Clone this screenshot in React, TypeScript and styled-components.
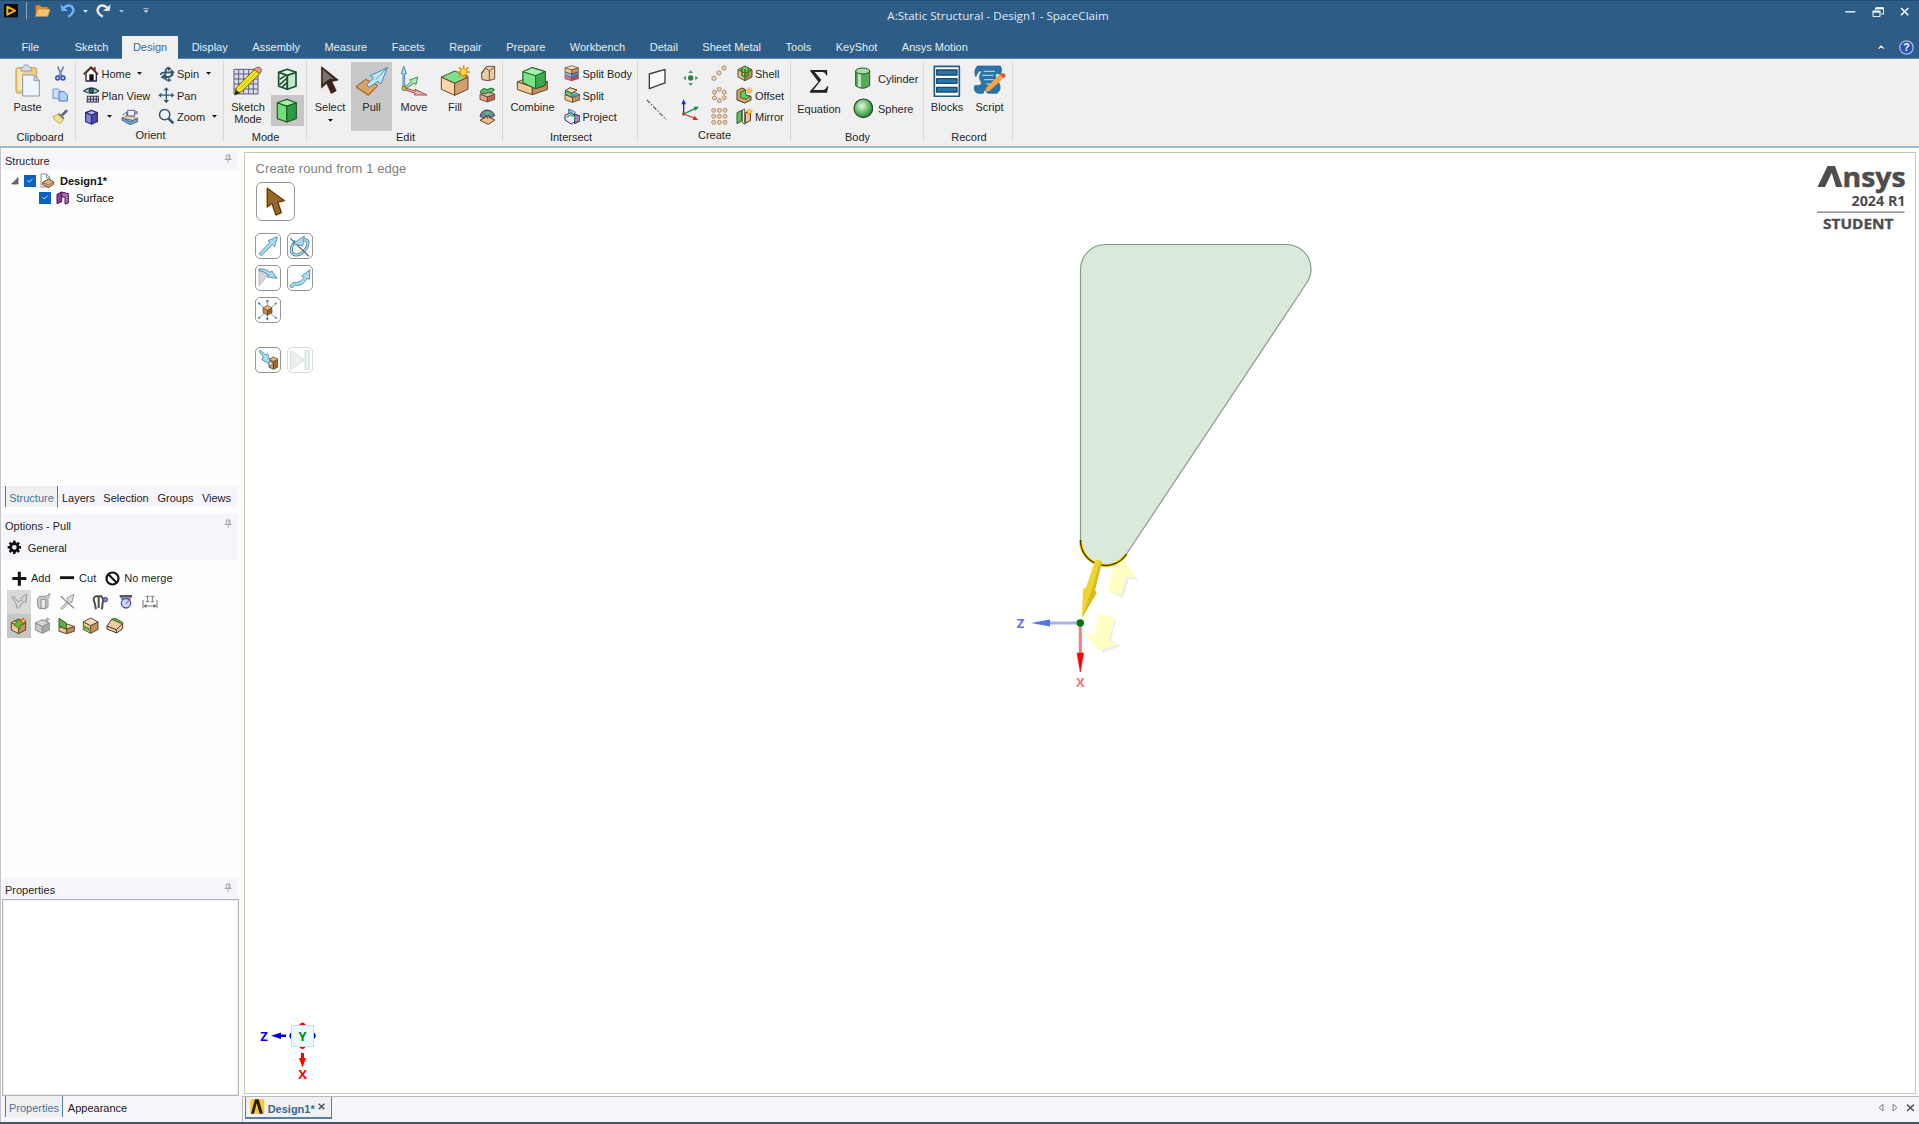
import React from "react";
import styled, { createGlobalStyle, css } from "styled-components";

const Global = createGlobalStyle`
  * { box-sizing: border-box; }
  html, body { margin: 0; padding: 0; background: #fff; overflow: hidden; }
  body { font-family: "Liberation Sans", Arial, sans-serif; font-size: 11px; color: #262626; }
`;

/* ---------- shell ---------- */
const Shell = styled.div`
  width: 1919px;
  height: 1124px;
  display: flex;
  flex-direction: column;
  background: #fdfdfe;
  overflow: hidden;
`;
const Header = styled.header`
  height: 59px;
  background: #2d5c86;
  border-top: 1px solid #214a6d;
  border-bottom: 1px solid #5f86aa;
  display: flex;
  flex-direction: column;
`;
const TitleBar = styled.div`
  height: 35px;
  display: grid;
  grid-template-columns: 868px 260px 1fr;
`;
const QuickAccess = styled.div`
  height: 20px;
  display: flex;
  align-items: center;
  padding-left: 4px;
`;
const WindowTitle = styled.div`
  font: 11.6px/30px "Open Sans", "Noto Sans", sans-serif;
  color: #e3ebf2;
  text-align: center;
  white-space: nowrap;
`;
const WindowButtons = styled.div`
  height: 22px;
  display: flex;
  align-items: center;
  justify-content: flex-end;
  padding-right: 9.5px;
  gap: 16px;
`;
const TabBar = styled.nav`
  height: 22px;
  display: flex;
  align-items: stretch;
`;
const Tab = styled.div<{ $active?: boolean; $w?: number }>`
  margin: 0 1px;
  padding: 0 11.25px;
  line-height: 23px;
  white-space: nowrap;
  color: ${(p) => (p.$active ? "#3c6b98" : "#e6edf4")};
  background: ${(p) => (p.$active ? "#f0f0f0" : "transparent")};
  ${(p) => p.$active && css`height: 23px;`}
  ${(p) => p.$w && css`width: ${p.$w}px; padding: 0 2px 0 0; margin: 0; text-align: center; line-height: 22px;`}
`;
const TabBarEnd = styled.div`
  margin-left: auto;
  padding-right: 5px;
  display: flex;
  align-items: center;
  gap: 13.5px;
`;

/* ---------- ribbon ---------- */
const Ribbon = styled.div`
  height: 89px;
  background: #f0f0f0;
  border-bottom: 2px solid #9fb9d0;
  display: flex;
`;
const Group = styled.section<{ $w: number }>`
  width: ${(p) => p.$w}px;
  height: 83px;
  padding-top: 4px;
  display: flex;
  flex-direction: column;
  flex: none;
  background: linear-gradient(#d9d9d9, #d9d9d9) right 2px / 1px 81px no-repeat;
`;
const GroupBody = styled.div`
  height: 67px;
  display: flex;
`;
const GroupLabel = styled.div<{ $dx?: number }>`
  line-height: 14px;
  text-align: center;
  padding-left: ${(p) => p.$dx ?? 0}px;
`;
const Big = styled.div<{ $w: number; $l?: number; $on?: boolean }>`
  width: ${(p) => p.$w}px;
  margin-left: ${(p) => p.$l ?? 0}px;
  margin-top: -1px;
  height: 69px;
  flex: none;
  display: flex;
  flex-direction: column;
  align-items: center;
  line-height: 12px;
  text-align: center;
  white-space: nowrap;
  background: ${(p) => (p.$on ? "#c8c8c8" : "transparent")};
  > svg:last-child:not(:first-child) { margin-top: 6px; }
`;
const BigIcon = styled.div`
  height: 39px;
  display: flex;
  align-items: center;
  padding-bottom: 1px;
`;
const Column = styled.div<{ $w: number; $l?: number; $t?: number; $center?: boolean }>`
  width: ${(p) => p.$w}px;
  margin-left: ${(p) => p.$l ?? 0}px;
  padding-top: ${(p) => p.$t ?? 0}px;
  flex: none;
  display: flex;
  flex-direction: column;
  align-items: ${(p) => (p.$center ? "center" : "flex-start")};
`;
const Row = styled.div<{ $h?: number }>`
  height: ${(p) => p.$h ?? 21.5}px;
  display: flex;
  align-items: center;
  white-space: nowrap;
`;
const IconBox = styled.span<{ $w?: number; $l?: number }>`
  width: ${(p) => p.$w ?? 16}px;
  margin-left: ${(p) => p.$l ?? 0}px;
  display: flex;
  justify-content: center;
  align-items: center;
`;
const Label = styled.span<{ $l?: number }>`
  margin-left: ${(p) => p.$l ?? 2.5}px;
  line-height: 13px;
  padding-top: 2px;
`;
const ModeButton = styled.div<{ $on?: boolean }>`
  width: 33px;
  height: 31px;
  display: flex;
  align-items: center;
  justify-content: center;
  background: ${(p) => (p.$on ? "#c6c6c6" : "transparent")};
`;

/* ---------- side panel ---------- */
const Main = styled.div`
  height: 974px;
  display: flex;
  border-left: 1px solid #c4c4cc;
`;
const Side = styled.aside`
  width: 241px;
  display: flex;
  flex-direction: column;
  padding: 2px 4px 0 1px;
`;
const PanelTitle = styled.div<{ $h?: number; $t?: number }>`
  height: ${(p) => p.$h ?? 20}px;
  flex: none;
  background: #f6f5fb;
  display: flex;
  align-items: center;
  justify-content: space-between;
  padding: 2px 6px 0 2px;
  margin: ${(p) => p.$t ?? 0}px 0 0 1px;
  > svg { margin-top: -4px; }
`;
const Tree = styled.div`
  height: 316px;
  padding-top: 2px;
`;
const TreeRow = styled.div<{ $l: number; $bold?: boolean }>`
  height: 17px;
  padding-left: ${(p) => p.$l}px;
  display: flex;
  align-items: center;
  font-weight: ${(p) => (p.$bold ? 700 : 400)};
  color: #111;
  > ${Label} { padding-top: 1px; }
`;
const Check = styled.span`
  width: 12px;
  height: 12px;
  background: #0b62bd;
  display: flex;
  align-items: center;
  justify-content: center;
`;
const TabStrip = styled.div`
  height: 21px;
  flex: none;
  display: flex;
  background: #f6f5fb;
  padding-left: 3px;
`;
const StripTab = styled.div<{ $w: number; $on?: boolean }>`
  width: ${(p) => p.$w}px;
  text-align: center;
  line-height: 24px;
  white-space: nowrap;
  color: ${(p) => (p.$on ? "#4a749b" : "#222")};
  ${(p) => p.$on && css`background: #f0f0f1; border: solid #4f7ea8; border-width: 0 1px;`}
`;
const Section = styled.div`
  height: 25px;
  margin-left: 1px;
  background: #f6f5fb;
  display: flex;
  align-items: center;
  padding-left: 4px;
  gap: 6px;
`;
const Options = styled.div`
  height: 318px;
  padding: 6px 0 0 5px;
`;
const ToolRow = styled.div<{ $h: number; $l?: number }>`
  height: ${(p) => p.$h}px;
  padding-left: ${(p) => p.$l ?? 0}px;
  display: flex;
  align-items: center;
  > ${Label} { padding-top: 1px; }
`;
const Tool = styled.div<{ $on?: string; $l?: number }>`
  width: 24px;
  height: 24px;
  margin-left: ${(p) => p.$l ?? 0}px;
  background: ${(p) => p.$on ?? "transparent"};
  display: flex;
  align-items: center;
  justify-content: center;
`;
const PropertyBox = styled.div`
  height: 197px;
  flex: none;
  width: 237px;
  border: 1px solid #b4b4b8;
  background: #fff;
  box-shadow: inset 0 0 0 1px #eeeef0;
`;
const SideFoot = styled.div`
  width: 241px;
  margin-left: -1px;
  flex: 1;
  background: #f7f6fc;
  padding-left: 1px;
`;

/* ---------- document area ---------- */
const Work = styled.main`
  flex: 1;
  display: flex;
  flex-direction: column;
`;
const Viewport = styled.div`
  position: relative;
  height: 942px;
  margin: 4px 3px 2px 2px;
  border: 1px solid #c9c6b2;
  background: #fff;
  padding: 8px 0 0 10px;
`;
const Scene = styled.svg`
  position: absolute;
  inset: 0;
`;
const Hint = styled.div`
  font-size: 13px;
  letter-spacing: 0.08px;
  line-height: 16px;
  color: #7f7f7f;
  padding-left: 0.6px;
`;
const Guide = styled.div<{ $big?: boolean; $faded?: boolean }>`
  width: ${(p) => (p.$big ? 39 : 26)}px;
  height: ${(p) => (p.$big ? 39 : 26)}px;
  border: 1.4px solid #969696;
  border-radius: ${(p) => (p.$big ? 6 : 5)}px;
  background: #fff;
  display: flex;
  align-items: center;
  justify-content: center;
  opacity: ${(p) => (p.$faded ? 0.35 : 1)};
`;
const GuideGrid = styled.div<{ $t: number; $l?: number }>`
  display: grid;
  grid-template-columns: 26px 26px;
  gap: 6px;
  padding-top: ${(p) => p.$t}px;
  padding-left: ${(p) => p.$l ?? 0}px;
`;
const DocBar = styled.div`
  flex: 1;
  border-top: 1px solid #b9b9c0;
  border-left: 1px solid #b9b9c0;
  background: #f7f6fc;
  display: flex;
  justify-content: space-between;
  padding: 0 4px 0 2px;
`;
const DocTab = styled.div`
  width: 87px;
  height: 22px;
  border: solid #5580a8;
  border-width: 0 1px 2px 1px;
  background: #f1f1f3;
  display: flex;
  align-items: center;
  padding-left: 4px;
  color: #3d678c;
  font-weight: 700;
  > span { margin: 3px 3px 0 3px; width: 47.5px; }
`;
const DocNav = styled.div`
  height: 22px;
  display: flex;
  align-items: center;
  gap: 8px;
`;
const StatusEdge = styled.div`
  height: 2px;
  background: #2d5c86;
`;

/* ---------- icon primitives (3 drawing units per pixel) ---------- */
const IconSvg = styled.svg`
  display: block;
  flex: none;
`;
type IcoProps = { b: [number, number, number, number]; children: React.ReactNode };
const Ico = ({ b, children }: IcoProps) => (
  <IconSvg width={b[2] / 3} height={b[3] / 3} viewBox={b.join(" ")} fill="none" strokeLinejoin="round">
    {children}
  </IconSvg>
);
type IsoProps = { x: number; y: number; w: number; h: number; c: [string, string, string]; s?: string; t?: number; d?: number };
const Iso = ({ x, y, w, h, c, s = "#5e472d", t = 2.5, d = 0.25 }: IsoProps) => {
  const q = d * h;
  const m = x + w / 2;
  return (
    <g stroke={s} strokeWidth={t}>
      <path fill={c[1]} d={`M${x} ${y + q}L${m} ${y + 2 * q}V${y + h}L${x} ${y + h - q}Z`} />
      <path fill={c[2]} d={`M${x + w} ${y + q}L${m} ${y + 2 * q}V${y + h}L${x + w} ${y + h - q}Z`} />
      <path fill={c[0]} d={`M${x} ${y + q}L${m} ${y}L${x + w} ${y + q}L${m} ${y + 2 * q}Z`} />
    </g>
  );
};
const TAN: [string, string, string] = ["#f6d9b4", "#f3c697", "#c98f5b"];
const Caret = ({ color = "#111" }: { color?: string }) => (
  <Ico b={[0, 0, 15, 9]}><path d="M0 0H15L7.500 8Z" fill={color} /></Ico>
);
const Spark = ({ x, y, r }: { x: number; y: number; r: number }) => (
  <g stroke="#ef8a12" strokeWidth={r / 4}>
    {[0, 45, 90, 135].map((a) => (
      <path key={a} d={`M${x - r} ${y}H${x + r}`} transform={`rotate(${a} ${x} ${y})`} />
    ))}
    <circle cx={x} cy={y} r={r * 0.5} fill="#ffe04a" strokeWidth={r / 7} />
  </g>
);
const Pin = () => (
  <Ico b={[672, 30, 24, 28]}><path d="M679 33H690V46H679ZM687 33V46M674 46.500H695M684.500 47V57" stroke="#9a9aa2" strokeWidth="2.500" /></Ico>
);
const Tick = () => (
  <Ico b={[0, 0, 24, 20]}><path d="M4 10L10 15L20 5" stroke="#e6f0fa" strokeWidth="2.600" /></Ico>
);

const Ribbons = () => (
  <Ribbon>
    <Group $w={76}>
      <GroupBody>
        <Big $l={5} $w={45}>
          <BigIcon>
            <Ico b={[47, 192, 78, 102]}>
              <rect x="50" y="203" width="62" height="76" rx="6" fill="#f0cf85" stroke="#c99a4b" strokeWidth="3" />
              <path d="M55 208H70V270H55Z" fill="#fae6b0" />
              <path d="M65 213V203Q72 204 74 196Q80 192 87 196Q88 204 97 203V213Z" fill="#d4dae6" stroke="#8b93a8" strokeWidth="2.500" />
              <path d="M70 225H104L120 242V288H70Z" fill="#f2f6fc" stroke="#8394bd" strokeWidth="3" />
              <path d="M104 225V242H120Z" fill="#c9d4ea" stroke="#8394bd" strokeWidth="2.500" />
            </Ico>
          </BigIcon>
          Paste
        </Big>
        <Column $w={20} $center>
          <Row><Ico b={[160, 198, 36, 48]}>
            <path d="M171 200L184 230M189 200L174 230" stroke="#6f87b4" strokeWidth="5" />
            <circle cx="171" cy="234" r="5.500" stroke="#2e54b5" strokeWidth="5" /><circle cx="187" cy="234" r="5.500" stroke="#2e54b5" strokeWidth="5" />
          </Ico></Row>
          <Row><Ico b={[155, 261, 48, 42]}>
            <path d="M158 264H174L182 272V292H158Z" fill="#cfe0fa" stroke="#6a94d2" strokeWidth="3" />
            <path d="M176 272H192L201 281V300H176Z" fill="#b3d0fa" stroke="#4b78c2" strokeWidth="3" />
          </Ico></Row>
          <Row><Ico b={[156, 324, 48, 46]}>
            <path d="M182 347L199 330" stroke="#5d6687" strokeWidth="8" strokeLinecap="round" />
            <path d="M158 346Q170 345 178 337L192 351Q188 361 180 368Q165 361 158 346Z" fill="#f3e38d" stroke="#b9a14f" strokeWidth="2.500" />
            <path d="M175 338L191 353" stroke="#6f6a80" strokeWidth="4" />
          </Ico></Row>
        </Column>
      </GroupBody>
      <GroupLabel $dx={4}>Clipboard</GroupLabel>
    </Group>

    <Group $w={148}>
      <GroupBody>
        <Column $l={7} $w={67.5}>
          <Row><IconBox><Ico b={[248, 196, 47, 48]}>
            <path d="M257 217V241H288V217L272 202Z" fill="#fffdf0" stroke="#2c1f57" strokeWidth="4" />
            <path d="M250 221L272 199L293 221" stroke="#4f3527" strokeWidth="5" /><path d="M280 199H286V212L280 206Z" fill="#7c2f23" />
            <path d="M267 221H280V240H267Z" fill="#0f0b20" />
          </Ico></IconBox><Label>Home</Label><IconBox $w={5} $l={6}><Caret /></IconBox></Row>
          <Row><IconBox><Ico b={[247, 260, 50, 48]}>
            <path d="M249 272Q272 254 295 272Q272 286 249 272Z" fill="#b9cdcf" stroke="#2d4a4f" strokeWidth="4" />
            <circle cx="272" cy="271" r="7" fill="#32636b" stroke="#122" strokeWidth="2.500" />
            <path d="M260 287H294V306H258Z" fill="#d9d5e4" /><path d="M259 288H295M258 297H295M257 305H295M260 286V306M269 286V306M278 286V306M287 286V306M294 286V306" stroke="#3d3852" strokeWidth="3.200" />
          </Ico></IconBox><Label>Plan View</Label></Row>
          <Row>
            <IconBox><Ico b={[249, 324, 44, 48]}><Iso x={254} y={328} w={35} h={41} d={0.17} c={["#b9bcf2", "#8489dd", "#4a4aa8"]} s="#2b2a73" t={3.5} /></Ico></IconBox>
            <IconBox $w={5} $l={8}><Caret /></IconBox>
            <IconBox $l={9.500}><Ico b={[361, 324, 52, 48]}>
              <path d="M364 350L385 343L411 352L388 362Z" fill="#f0d0a8" stroke="#9a7653" strokeWidth="2" />
              <path d="M364 350V358L388 371L411 362V352L388 362Z" fill="#7ba6c6" stroke="#3c5d86" strokeWidth="2.500" />
              <path d="M381 328H402V345H381Z" fill="#f2f2fb" stroke="#5a5aa0" strokeWidth="3" /><path d="M402 330H411V340H402Z" fill="#7b8ad0" />
              <path d="M366 343L378 333V346M372 353L395 358" stroke="#3c5d86" strokeWidth="2.500" />
            </Ico></IconBox>
          </Row>
        </Column>
        <Column $l={8} $w={65}>
          <Row><IconBox><Ico b={[473, 196, 48, 48]}>
            <path d="M478 223Q479 215 491 215H512M506 206Q494 198 492 214V226Q493 238 499 240M512 215Q519 224 503 229H488" stroke="#2e5876" strokeWidth="5.500" />
            <path d="M508 205L520 215L508 224ZM490 220L478 229L490 238ZM501 231L511 239L500 244ZM498 197L510 203L501 211Z" fill="#2e5876" />
          </Ico></IconBox><Label>Spin</Label><IconBox $w={5} $l={7}><Caret /></IconBox></Row>
          <Row><IconBox><Ico b={[472, 260, 50, 50]}>
            <path d="M480 284.500H514M497 267V302" stroke="#2e5876" strokeWidth="4" />
            <path d="M473 284.500L482 277V292ZM521 284.500L512 277V292ZM497 260.500L489 270H505ZM497 308.500L489 299H505Z" fill="#2e5876" />
          </Ico></IconBox><Label>Pan</Label></Row>
          <Row><IconBox><Ico b={[472, 324, 50, 50]}>
            <circle cx="492" cy="344" r="15.500" fill="#eef5fa" stroke="#2e5876" strokeWidth="4.500" /><path d="M504 356L518 370" stroke="#2e5876" strokeWidth="8" />
          </Ico></IconBox><Label>Zoom</Label><IconBox $w={5} $l={7}><Caret /></IconBox></Row>
        </Column>
      </GroupBody>
      <GroupLabel $dx={1}>Orient</GroupLabel>
    </Group>

    <Group $w={83}>
      <GroupBody>
        <Big $l={2} $w={44}>
          <BigIcon><Ico b={[698, 198, 94, 92]}>
            <path d="M704 208H776V282H704Z" fill="#dcdce8" />
            <path d="M704 208H776M704 222H776M704 237H776M704 252H776M704 267H776M704 282H776M704 208V282M718 208V282M733 208V282M748 208V282M762 208V282M776 208V282" stroke="#5d5d78" strokeWidth="3" />
            <path d="M706 285L712 262L766 208L781 221L728 274Z" fill="#f2e51e" stroke="#6b600e" strokeWidth="3" />
            <path d="M720 268L773 214" stroke="#c9b915" strokeWidth="3" /><path d="M706 285L710 270L722 279Z" fill="#2c2410" />
            <path d="M764 208L772 202Q781 199 786 207Q788 214 781 221Z" fill="#e8998c" stroke="#7c4a42" strokeWidth="2.500" />
          </Ico></BigIcon>
          Sketch<br />Mode
        </Big>
        <Column $l={0.5} $w={33} $t={1}>
          <ModeButton><Ico b={[830, 204, 62, 68]}>
            <Iso x={835} y={208} w={52} h={60} d={0.15} c={["#e8f7ea", "#e8f7ea", "#bfe8c6"]} s="#1d4f2d" t={5} />
            <path d="M838 238L856 226M838 254L860 234M846 261L860 248" stroke="#1d4f2d" strokeWidth="5" />
          </Ico></ModeButton>
          <ModeButton $on><Ico b={[828, 292, 66, 76]}><Iso x={832} y={296} w={57} h={68} d={0.15} c={["#a4f5a0", "#72df78", "#2f9c44"]} s="#1d5a2a" t={3.5} /></Ico></ModeButton>
        </Column>
      </GroupBody>
      <GroupLabel>Mode</GroupLabel>
    </Group>

    <Group $w={196}>
      <GroupBody>
        <Big $l={2} $w={42}>
          <BigIcon><Ico b={[62, 200, 60, 90]}>
            <path d="M67 203V265L82 251L96 282L110 274L97 246L116 242Z" fill="#5b4d49" stroke="#e0b595" strokeWidth="5" />
            <path d="M67 203V265L82 251L96 282L110 274L97 246L116 242Z" fill="#3a2420" stroke="#1c0f0c" strokeWidth="2" />
            <path d="M70 210V255L82 244L92 238L104 240Z" fill="#7b7270" />
          </Ico></BigIcon>
          Select<Caret />
        </Big>
        <Big $on $w={41}>
          <BigIcon><Ico b={[164, 200, 102, 92]}>
            <path d="M167 262L196 240L232 258L204 286Z" fill="#dca26a" stroke="#84572c" strokeWidth="3" />
            <path d="M167 262V266L204 291L232 262V258L204 286Z" fill="#b9803f" />
            <path d="M206 264L199 256L220 236L210 229L261 205L242 254L233 246Z" fill="#bfe8f8" stroke="#4188ad" strokeWidth="3" />
            <path d="M261 205L226 241" stroke="#4f97bd" strokeWidth="3" />
          </Ico></BigIcon>
          Pull
        </Big>
        <Big $w={42} $l={1}>
          <BigIcon><Ico b={[298, 196, 84, 96]}>
            <path d="M307 262V222H302L309 199L317 222H312V262Z" fill="#b4dcf4" stroke="#4f86a8" strokeWidth="3" />
            <path d="M312 262L332 246L327 241L351 232L346 255L340 250L318 266Z" fill="#a2eeae" stroke="#438f55" strokeWidth="3" />
            <path d="M313 264L345 275L343 269L379 286L341 286L343 281L312 270Z" fill="#f4b1b4" stroke="#a54a52" strokeWidth="3" />
            <circle cx="310" cy="266" r="6" fill="#d5cf51" stroke="#6d6824" strokeWidth="3" />
          </Ico></BigIcon>
          Move
        </Big>
        <Big $w={39} $l={0.5}>
          <BigIcon><Ico b={[417, 195, 92, 96]}>
            <Iso x={421} y={213} w={80} h={73} d={0.25} c={["#7ee08a", "#fbd5ab", "#d39f6c"]} t={3} /><Spark x={488} y={216} r={20} />
          </Ico></BigIcon>
          Fill
        </Big>
        <Column $w={20} $l={3} $center>
          <Row><Ico b={[540, 198, 48, 50]}>
            <path d="M544 222L560 202H584V240L566 245L546 242Z" fill="#eccba5" stroke="#66503a" strokeWidth="3" /><path d="M546 224L556 206L568 216L584 204M568 216V244" stroke="#66503a" strokeWidth="3" />
          </Ico></Row>
          <Row><Ico b={[538, 263, 50, 48]}>
            <Iso x={541} y={277} w={44} h={31} c={["#f3aaa9", "#ee9f9c", "#b9655c"]} t={2.500} />
            <path d="M541 278Q550 262 562 271Q575 262 584 270Q578 284 566 279Q553 288 541 278Z" fill="#59b967" stroke="#236a37" strokeWidth="3" />
          </Ico></Row>
          <Row><Ico b={[538, 328, 50, 48]}>
            <path d="M541 362L562 350L586 361L566 374Z" fill="#eebf92" stroke="#5c3f29" strokeWidth="3" />
            <path d="M541 350Q545 332 562 331Q580 332 585 348L574 354L563 344L552 356Z" fill="#6a8aa2" stroke="#3d3644" strokeWidth="3" /><path d="M555 337H572L563 349Z" fill="#4fc870" /><path d="M563 345V358" stroke="#b03a3a" strokeWidth="3" />
          </Ico></Row>
        </Column>
      </GroupBody>
      <GroupLabel $dx={1}>Edit</GroupLabel>
    </Group>

    <Group $w={135}>
      <GroupBody>
        <Big $l={6} $w={47}>
          <BigIcon><Ico b={[646, 200, 98, 92]}>
            <Iso x={650} y={232} w={90} h={54} c={TAN} t={3} d={0.28} />
            <path d="M667 217L694 205L734 217V258L705 268L667 250Z" fill="#6fdc7b" stroke="#27643a" strokeWidth="3.500" />
            <path d="M667 217L705 229V268L667 250Z" fill="#7be384" stroke="#27643a" strokeWidth="3" /><path d="M667 217L694 205L734 217L705 229Z" fill="#a0f2a4" stroke="#27643a" strokeWidth="3" /><path d="M705 229L734 217V257L705 268Z" fill="#3cab50" stroke="#27643a" strokeWidth="3" />
          </Ico></BigIcon>
          Combine
        </Big>
        <Column $l={8} $w={70}>
          <Row><IconBox><Ico b={[793, 195, 46, 50]}>
            <Iso x={796} y={219} w={40} h={23} c={["#ec6b70", "#ef7277", "#bc4b53"]} s="#8a3c44" t={2} /><Iso x={796} y={210} w={40} h={22} c={["#83b6e0", "#83b6e0", "#4d86b7"]} s="#3f6c96" t={2} /><Iso x={796} y={197} w={40} h={25} c={TAN} t={2} />
          </Ico></IconBox><Label>Split Body</Label></Row>
          <Row><IconBox><Ico b={[790, 260, 50, 48]}>
            <Iso x={793} y={275} w={45} h={31} c={["#7fd4e7", "#f4c998", "#c88f58"]} t={2.500} /><path d="M794 271L808 262L829 269L814 279Z" fill="#f6d9b4" stroke="#4a3620" strokeWidth="3" /><path d="M794 271V282L814 291V279Z" fill="#79c56f" stroke="#27643a" strokeWidth="3" />
            <path d="M816 282L835 284L824 293Z" fill="#3b87be" />
          </Ico></IconBox><Label>Split</Label></Row>
          <Row><IconBox><Ico b={[790, 324, 50, 50]}>
            <path d="M804 327V340M804 327L825 337L815 346Z" fill="#9fd4ee" stroke="#3c85a8" strokeWidth="3" />
            <path d="M793 346L810 338L822 346V366L812 372L793 360Z" fill="#eee6ff" stroke="#34285c" strokeWidth="3" /><path d="M822 342L838 348V363L822 371Z" fill="#a685c5" stroke="#34285c" strokeWidth="3" /><path d="M798 352L808 345L822 350V362" stroke="#2cab4a" strokeWidth="4" />
          </Ico></IconBox><Label>Project</Label></Row>
        </Column>
      </GroupBody>
      <GroupLabel $dx={1}>Intersect</GroupLabel>
    </Group>

    <Group $w={153}>
      <GroupBody>
        <Column $l={4} $w={30} $center $t={-1}>
          <Row $h={31}><Ico b={[54, 199, 56, 68]}><path d="M58 220L105 206V247L58 264Z" fill="#fbfbfb" stroke="#3c3c3c" strokeWidth="4" /></Ico></Row>
          <Row $h={32}><Ico b={[50, 298, 64, 64]}><path d="M53 301L111 360" stroke="#555" strokeWidth="3.500" strokeDasharray="13 5 4 5" /></Ico></Row>
        </Column>
        <Column $l={3.5} $w={30} $center>
          <Row $h={29}><Ico b={[158, 208, 46, 48]}>
            <circle cx="181" cy="232" r="8" fill="#2c7f45" /><path d="M159 232L167 225V239ZM203 232L195 225V239ZM181 209L174 217H188ZM181 255L174 247H188Z" fill="#3f9457" />
          </Ico></Row>
          <Row $h={36}><Ico b={[154, 298, 56, 64]}>
            <path d="M162 342V310" stroke="#2222e0" strokeWidth="4" /><path d="M162 299L155 314H169Z" fill="#2222e0" />
            <path d="M164 342L196 327" stroke="#139447" strokeWidth="4" /><path d="M208 321L192 321L197 334Z" fill="#139447" />
            <path d="M163 343L192 355" stroke="#d22a33" strokeWidth="4" /><path d="M206 361L189 361L194 348Z" fill="#d22a33" /><circle cx="162" cy="343" r="5" fill="#a34c2b" />
          </Ico></Row>
        </Column>
        <Column $l={4} $w={20} $center>
          <Row><Ico b={[244, 196, 50, 50]}><g fill="#edcfaf" stroke="#a3805c" strokeWidth="2.500"><circle cx="283" cy="205" r="6.500" /><circle cx="268" cy="220" r="6.500" /><circle cx="253" cy="236" r="6.500" /></g></Ico></Row>
          <Row><Ico b={[244, 259, 50, 50]}><g fill="#edcfaf" stroke="#a3805c" strokeWidth="2.500">{[0, 60, 120, 180, 240, 300].map((a) => <circle key={a} cx="269" cy="266" r="6" transform={`rotate(${a} 269 283)`} />)}</g></Ico></Row>
          <Row><Ico b={[244, 323, 50, 50]}><g fill="#edcfaf" stroke="#a3805c" strokeWidth="2.500">{[330, 348, 366].map((y) => [252, 269, 286].map((x) => <circle key={`${x}-${y}`} cx={x} cy={y} r="6" />))}</g></Ico></Row>
        </Column>
        <Column $l={7} $w={48}>
          <Row><IconBox><Ico b={[320, 195, 48, 50]}><Iso x={323} y={198} w={42} h={44} c={["#7dcc55", "#efbd88", "#c78a52"]} t={3} /><path d="M335 205V226L344 232L354 226V205M344 207V230" stroke="#2b8b2a" strokeWidth="5" /></Ico></IconBox><Label>Shell</Label></Row>
          <Row><IconBox><Ico b={[318, 259, 52, 50]}>
            <path d="M321 270L336 262L345 266V283L363 287V298L344 307L321 298Z" fill="#d9a56f" stroke="#4c3521" strokeWidth="3" /><path d="M332 274L346 268L348 283L360 287L348 296L332 291Z" fill="#6dc65c" stroke="#2b6b2e" strokeWidth="3" /><Spark x={358} y={270} r={10} />
          </Ico></IconBox><Label>Offset</Label></Row>
          <Row><IconBox><Ico b={[318, 323, 52, 50]}>
            <path d="M321 337L335 330V362L321 370Z" fill="#61bd5b" stroke="#275e2a" strokeWidth="3" /><path d="M337 329L344 326V372L337 367Z" fill="#e9e9ef" stroke="#444" strokeWidth="2.500" /><path d="M346 337L361 334V361L346 369Z" fill="#f2c494" stroke="#4c3521" strokeWidth="3" /><Spark x={358} y={334} r={10} />
          </Ico></IconBox><Label>Mirror</Label></Row>
        </Column>
      </GroupBody>
      <GroupLabel $dx={-1}>Create</GroupLabel>
    </Group>

    <Group $w={133}>
      <GroupBody>
        <Big $l={4} $w={48}>
          <BigIcon><Ico b={[538, 204, 60, 80]}>
            <path d="M542 210H592L593 226H589Q587 216 578 216H555L575 240L551 270H579Q589 270 592 259H596L592 278H541V274L566 245L542 214Z" fill="#222" />
          </Ico></BigIcon>
          <Label $l={0}>Equation</Label>
        </Big>
        <Column $l={9} $w={72}>
          <Row $h={30}><IconBox $w={22}><Ico b={[672, 198, 52, 68]}>
            <path d="M677 210V254Q698 270 719 254V210Z" fill="#57aa5c" stroke="#24552c" strokeWidth="3" /><path d="M684 216H693V259L684 257Z" fill="#b8e6b4" /><ellipse cx="698" cy="210" rx="21" ry="9" fill="#a9dca6" stroke="#24552c" strokeWidth="3" />
          </Ico></IconBox><Label $l={4}>Cylinder</Label></Row>
          <Row $h={31}><IconBox $w={22}><Ico b={[667, 293, 62, 62]}>
            <defs><radialGradient id="sph" cx=".42" cy=".38" r=".62"><stop offset="0" stopColor="#e9fbe5" /><stop offset=".5" stopColor="#7cc77c" /><stop offset="1" stopColor="#2d7f3b" /></radialGradient></defs>
            <circle cx="698" cy="324" r="28" fill="url(#sph)" stroke="#1d4d28" strokeWidth="3.500" />
          </Ico></IconBox><Label $l={4}>Sphere</Label></Row>
        </Column>
      </GroupBody>
      <GroupLabel>Body</GroupLabel>
    </Group>

    <Group $w={89}>
      <GroupBody>
        <Big $l={2} $w={42}>
          <BigIcon><Ico b={[910, 190, 82, 98]}>
            <path d="M914 194H989V284H914Z" fill="#f4f9fc" stroke="#235a82" strokeWidth="5" /><path d="M921 205H982V220H921ZM921 231H982V245H921ZM921 257H982V271H921Z" fill="#2b74a5" stroke="#174b70" strokeWidth="4" />
          </Ico></BigIcon>
          Blocks
        </Big>
        <Big $l={1} $w={41}>
          <BigIcon><Ico b={[1026, 190, 102, 100]}>
            <path d="M1034 228Q1027 209 1039 196H1108Q1116 207 1108 221L1095 218Q1090 229 1103 244Q1114 267 1098 278H1042Q1026 274 1031 255L1050 253Q1054 247 1046 236Q1043 223 1054 210L1043 212Z" fill="#2b74a5" stroke="#1d5f8e" strokeWidth="2" />
            <path d="M1058 212H1092M1054 224H1087M1060 237H1088M1066 250H1086" stroke="#a8cde4" strokeWidth="4" />
            <path d="M1061 275L1066 261L1106 221L1117 232L1077 270Z" fill="#f6a542" /><path d="M1054 287L1061 270L1071 280Z" fill="#f4eee4" /><path d="M1107 222L1113 217Q1124 218 1124 227L1118 233Z" fill="#e8513f" />
          </Ico></BigIcon>
          Script
        </Big>
      </GroupBody>
      <GroupLabel $dx={1}>Record</GroupLabel>
    </Group>
  </Ribbon>
);

const SidePanel = () => (
  <Side>
    <PanelTitle>Structure<Pin /></PanelTitle>
    <Tree>
      <TreeRow $l={9} $bold>
        <Ico b={[32, 96, 24, 24]}><path d="M34 117L53 98V117Z" fill="#6c6c6c" stroke="#404040" strokeWidth="2" /></Ico>
        <IconBox $w={12} $l={5}><Check><Tick /></Check></IconBox>
        <IconBox $l={3.500} $w={15}><Ico b={[119, 84, 45, 45]}>
          <path d="M122 87H138L149 98V126H122Z" fill="#fff" stroke="#8a8aa0" strokeWidth="3" /><path d="M138 87V98H149" stroke="#8a8aa0" strokeWidth="3" /><path d="M127 112L145 102L160 111V118L144 127L127 119Z" fill="#e5b176" stroke="#6a4a2b" strokeWidth="3" /><path d="M128 113L144 120L159 112" stroke="#6a4a2b" strokeWidth="2" />
        </Ico></IconBox>
        <Label $l={5.500}>Design1*</Label>
      </TreeRow>
      <TreeRow $l={37}>
        <Check><Tick /></Check>
        <IconBox $l={4} $w={15}><Ico b={[167, 134, 42, 42]}>
          <path d="M170 144L184 137V166L170 172Z" fill="#8c3f92" stroke="#45164b" strokeWidth="3" /><path d="M184 137L204 142V170L194 173V153L184 151Z" fill="#b56bbb" stroke="#45164b" strokeWidth="3" />
        </Ico></IconBox>
        <Label $l={6}>Surface</Label>
      </TreeRow>
    </Tree>
    <TabStrip>
      <StripTab $w={53} $on>Structure</StripTab>
      <StripTab $w={41}>Layers</StripTab>
      <StripTab $w={54}>Selection</StripTab>
      <StripTab $w={45}>Groups</StripTab>
      <StripTab $w={37}>Views</StripTab>
    </TabStrip>
    <PanelTitle $h={21} $t={7}>Options - Pull<Pin /></PanelTitle>
    <Section>
      <Ico b={[22, 183, 44, 44]}>
        <g stroke="#111" strokeWidth="8">{[0, 45, 90, 135].map((a) => <path key={a} d="M24 205H64" transform={`rotate(${a} 44 205)`} />)}</g>
        <circle cx="44" cy="205" r="11" fill="#f6f5fb" stroke="#111" strokeWidth="8" />
      </Ico>
      <Label $l={0}>General</Label>
    </Section>
    <Options>
      <ToolRow $h={24} $l={4.500}>
        <Ico b={[36, 273, 45, 45]}><path d="M37 295.500H79M58 275V317" stroke="#111" strokeWidth="9" /></Ico>
        <Label $l={4.500}>Add</Label>
        <IconBox $w={15} $l={9}><Ico b={[180, 290, 44, 10]}><path d="M180 295H224" stroke="#111" strokeWidth="8.500" /></Ico></IconBox>
        <Label $l={4.500}>Cut</Label>
        <IconBox $w={15} $l={8.500}><Ico b={[314, 273, 45, 45]}><circle cx="336.500" cy="295.500" r="18" stroke="#111" strokeWidth="6.500" /><path d="M324 283L349 308" stroke="#111" strokeWidth="6.500" /></Ico></IconBox>
        <Label $l={4.500}>No merge</Label>
      </ToolRow>
      <ToolRow $h={24}>
        <Tool $on="#d9d9d9"><Ico b={[34, 340, 50, 52]}>
          <path d="M36 352L42 350L55 366L67 361L63 356L81 343L79 369L73 364L58 384L52 386L48 370Z" fill="#d3d3d3" stroke="#9a9a9a" strokeWidth="3" />
        </Ico></Tool>
        <Tool $l={0.5}><Ico b={[108, 340, 46, 52]}><path d="M113 357L118 350H138L144 357V381L138 387H118L113 380Z" fill="#cdcdcd" stroke="#8f8f8f" strokeWidth="3" /><path d="M123 359H137V386H123ZM138 350L152 343M147 340V356" stroke="#8f8f8f" strokeWidth="3" fill="#e8e8e8" /></Ico></Tool>
        <Tool><Ico b={[178, 340, 50, 52]}>
          <path d="M183 386L207 362L200 356L223 344L216 370L211 366L188 389Z" fill="#dedede" stroke="#9c9c9c" strokeWidth="3" /><path d="M183 350L223 386" stroke="#8c8c8c" strokeWidth="4" />
        </Ico></Tool>
        <Tool $l={9.500}><Ico b={[279, 340, 52, 50]}>
          <path d="M289 347Q280 355 287 366L291 386M299 349V382M309 386L311 366Q316 356 307 347M289 347H309" stroke="#4d4d52" strokeWidth="6" /><circle cx="319" cy="357" r="7" fill="#7782da" stroke="#40407a" strokeWidth="2.500" />
        </Ico></Tool>
        <Tool $l={0.5}><Ico b={[356, 342, 42, 48]}><path d="M358 345H395V353H358Z" fill="#565660" /><path d="M362 353H391V360H362Z" fill="#7a86c0" /><circle cx="377" cy="370" r="14" fill="#cbd4fa" stroke="#4a569c" strokeWidth="4" /><path d="M377 371L386 361" stroke="#c33" strokeWidth="3" /></Ico></Tool>
        <Tool><Ico b={[425, 344, 48, 44]}><path d="M428 359V384M470 359V384M430 377H468M442 348V364M456 348V364M436 348H447M451 348H462M436 364H447M451 364H462" stroke="#77777a" strokeWidth="3" /><path d="M430 377L438 371V383ZM468 377L460 371V383Z" fill="#68686c" /></Ico></Tool>
      </ToolRow>
      <ToolRow $h={24}>
        <Tool $on="#c6c6c6"><Ico b={[31, 413, 52, 52]}>
          <Iso x={35} y={419} w={43} h={44} c={["#f5cc99", "#f5c896", "#c98f58"]} t={3} /><path d="M44 424L65 421L76 432Q63 433 60 449L43 438Q46 429 54 428Z" fill="#6bb436" stroke="#3d7420" strokeWidth="2.500" /><path d="M62 425H80M71 416V434" stroke="#e2401c" strokeWidth="5" /><circle cx="71" cy="425" r="4" fill="#ffc93c" />
        </Ico></Tool>
        <Tool><Ico b={[103, 413, 52, 52]}><Iso x={107} y={421} w={42} h={41} c={["#d5d5d5", "#c8c8c8", "#a8a8a8"]} s="#8d8d8d" t={3} /><path d="M128 423L143 425L150 434L137 436M136 420H151M144 414V428" stroke="#9b9b9b" strokeWidth="3" /></Ico></Tool>
        <Tool><Ico b={[174, 413, 52, 52]}>
          <Iso x={177} y={434} w={46} h={29} c={["#f5d4aa", "#f3c28e", "#c58b57"]} t={3} /><path d="M177 417L199 431V450L177 440Z" fill="#69a948" stroke="#2d6423" strokeWidth="3" />
        </Ico></Tool>
        <Tool><Ico b={[246, 413, 52, 52]}><Iso x={250} y={416} w={44} h={46} c={TAN} t={3} /><path d="M250 437L272 448V457L250 446Z" fill="#55a33b" /></Ico></Tool>
        <Tool><Ico b={[318, 413, 52, 52]}>
          <path d="M321 440L336 419L368 432V448L350 461L321 449Z" fill="#f4cba0" stroke="#4a3620" strokeWidth="3" /><path d="M335 420L345 416L368 429V435Z" fill="#58a63a" stroke="#2d6423" strokeWidth="2" /><path d="M321 440L349 451L368 433M349 451V461" stroke="#4a3620" strokeWidth="3" />
        </Ico></Tool>
      </ToolRow>
    </Options>
    <PanelTitle $h={21}>Properties<Pin /></PanelTitle>
    <PropertyBox />
    <SideFoot>
      <TabStrip>
        <StripTab $w={58} $on>Properties</StripTab>
        <StripTab $w={69}>Appearance</StripTab>
      </TabStrip>
    </SideFoot>
  </Side>
);

const AxisText = styled.text`
  font: 700 13px "Open Sans", "Noto Sans", sans-serif;
  text-anchor: middle;
`;
const LogoText = styled.text`
  font-family: "Open Sans", "Noto Sans", sans-serif;
  font-weight: 700;
  fill: #4d4d4d;
`;

const Canvas3D = () => (
  <Scene width="1670" height="940" viewBox="245 153 1670 940">
    <path d="M1080.500 540V269.500A25 25 0 0 1 1105.500 244.500H1285.500A24.500 24.500 0 0 1 1306.300 283.500L1126.500 554A25 25 0 0 1 1080.500 540Z" fill="#dbe9db" stroke="#80a083" strokeWidth="1.200" />
    <g fill="#ececec"><path d="M1109 592L1123 598L1129 579L1138 580L1126 563Z" /><path d="M1102 616L1116 620L1111 640L1121 646L1102 653Z" /></g>
    <path d="M1107 590.500L1121 595.500L1126 576.500L1137 578L1124 560.500L1107 566L1113 570Z" fill="#ffffc4" />
    <path d="M1099.500 614L1114.500 618L1109 641L1118.500 644L1099 650.500L1083 632.500L1094 636Z" fill="#ffffc4" />
    <path d="M1080.500 540A25 25 0 0 0 1126.500 554" fill="none" stroke="#f4d400" strokeWidth="3.200" />
    <path d="M1080.500 540A25 25 0 0 0 1126.500 554" fill="none" stroke="#3c3508" strokeWidth="1.300" />
    <path d="M1080.300 625V654" stroke="#f47c7c" strokeWidth="3" />
    <path d="M1077 653H1083.500L1080.300 672Z" fill="#f00" stroke="#f00" strokeWidth=".6" />
    <path d="M1049 623H1077" stroke="#a0b4ee" strokeWidth="3" />
    <path d="M1050 619.500V626.500L1031 623Z" fill="#4a76f0" />
    <circle cx="1080.300" cy="623" r="3.700" fill="#087308" />
    <path d="M1095 561Q1099 558 1102 562L1095 590L1096.500 593L1082 618L1083 589L1086 587.500Z" fill="#edd530" />
    <path d="M1100 562L1091.500 590L1082 618L1096.500 593L1095 590L1102 562Z" fill="#d6bd22" />
    <AxisText x="1020.500" y="627.500" fill="#6c6cf5">Z</AxisText>
    <AxisText x="1080.300" y="687" fill="#f57676">X</AxisText>

    <g fill="#f00"><path d="M299 1025Q302.500 1020 306 1025ZM299 1046.500Q302.500 1051.500 306 1046.500Z" /><path d="M301 1053H304V1058H306L302.500 1067.500L299 1058H301Z" /></g>
    <g fill="#0000f0"><path d="M291.500 1032Q287 1035.500 291.500 1039.500ZM313.500 1032Q318 1035.500 313.500 1039.500Z" /><path d="M286 1034.500V1037H281V1039L271 1035.800L281 1032.500V1034.500Z" /></g>
    <rect x="291.500" y="1025.500" width="22" height="21" fill="#e9fcfd" stroke="#cbdde8" />
    <AxisText x="302.500" y="1040.500" fill="#0b850b">Y</AxisText>
    <AxisText x="264" y="1040.500" fill="#0000f0">Z</AxisText>
    <AxisText x="302.500" y="1078.500" fill="#f00">X</AxisText>

    <path d="M1817.500 187L1827.500 166H1835L1825 187ZM1831.500 172L1835 166L1842.500 187H1836Z" fill="#4d4d4d" />
    <LogoText x="1842.500" y="187" fontSize="27" textLength="63" lengthAdjust="spacingAndGlyphs" stroke="#4d4d4d" strokeWidth=".5">nsys</LogoText>
    <LogoText x="1851.500" y="206" fontSize="14" textLength="54" lengthAdjust="spacingAndGlyphs">2024 R1</LogoText>
    <path d="M1817 212.200H1904.500" stroke="#777" strokeWidth="1.300" />
    <LogoText x="1823" y="229" fontSize="14.500" textLength="70.500" lengthAdjust="spacingAndGlyphs" stroke="#4d4d4d" strokeWidth=".3">STUDENT</LogoText>
  </Scene>
);

const BLUE = { fill: "#a8dbef", stroke: "#3f809f", strokeWidth: 2.4 };

const Guides = () => (
  <>
    <Hint>Create round from 1 edge</Hint>
    <GuideGrid $t={5} $l={1}>
      <Guide $big><Ico b={[796, 124, 62, 92]}>
        <path d="M803 131V187L817 176L829 211L845 204L834 172L854 168Z" stroke="#f5b96a" strokeWidth="7" />
        <path d="M803 131V187L817 176L829 211L845 204L834 172L854 168Z" fill="#94692d" stroke="#3d2a12" strokeWidth="3" />
      </Ico></Guide>
    </GuideGrid>
    <GuideGrid $t={12}>
      <Guide><Ico b={[774, 272, 60, 60]}><path d="M777 325L810 291L804 286L832 274L824 304L817 298L784 331Z" {...BLUE} /></Ico></Guide>
      <Guide><Ico b={[868, 268, 64, 68]}>
        <path d="M888 286Q871 304 876 320Q884 334 904 324Q926 308 925 290Q923 281 912 283" stroke="#3f809f" strokeWidth="9" /><path d="M888 286Q871 304 876 320Q884 334 904 324Q926 308 925 290Q923 281 912 283" stroke="#a8dbef" strokeWidth="4.500" />
        <path d="M872 278L928 332" stroke="#555" strokeWidth="3.500" /><path d="M880 294L914 271L909 301Z" {...BLUE} />
      </Ico></Guide>
      <Guide><Ico b={[774, 366, 60, 64]}>
        <path d="M777 374V423L808 385Z" fill="#d4d6df" stroke="#a7a9b5" strokeWidth="2" /><path d="M777 371Q796 370 812 382L815 377L831 400L802 396L806 390Q792 379 777 377Z" {...BLUE} />
      </Ico></Guide>
      <Guide><Ico b={[868, 368, 66, 62]}><path d="M871 424Q875 409 890 412Q904 411 912 397L906 392L931 373L929 402L922 399Q910 422 894 420Q882 417 878 428Z" {...BLUE} /></Ico></Guide>
      <Guide><Ico b={[772, 462, 64, 66]}>
        <path d="M803 465V525M776 474L830 520M831 474L777 520" stroke="#5f96ae" strokeWidth="2.500" /><path d="M803 463L798 471H808ZM803 527L798 519H808ZM774 472L783 474L778 480ZM832 472L824 474L829 480ZM774 522L783 520L778 514ZM832 522L824 520L829 514Z" fill="#3f809f" />
        <Iso x={790} y={481} w={27} h={30} c={["#edb67f", "#c98b52", "#9a622f"]} t={2} />
      </Ico></Guide>
    </GuideGrid>
    <GuideGrid $t={24}>
      <Guide><Ico b={[774, 612, 62, 64]}>
        <Iso x={807} y={636} w={27} h={37} d={0.18} c={["#edb67f", "#d29559", "#a3662f"]} t={2.500} /><path d="M777 619L783 616L796 630L803 626L812 659L786 644L790 636Z" {...BLUE} /><circle cx="812" cy="656" r="5" fill="#fff" stroke="#2f7394" strokeWidth="2.500" />
      </Ico></Guide>
      <Guide $faded><Ico b={[868, 612, 66, 66]}><path d="M873 617L915 645L873 673ZM916 617H929V673H916Z" fill="#bcdcc8" stroke="#8b9b9e" strokeWidth="3" /></Ico></Guide>
    </GuideGrid>
  </>
);

const TABS = ["Sketch", "Design", "Display", "Assembly", "Measure", "Facets", "Repair", "Prepare", "Workbench", "Detail", "Sheet Metal", "Tools", "KeyShot", "Ansys Motion"];

export default function App() {
  return (
    <Shell>
      <Global />
      <Header>
        <TitleBar>
          <QuickAccess>
            <Ico b={[12, 12, 42, 40]}><path d="M12 12H54V52H12Z" fill="#0d0c08" /><path d="M22 20L45 32L22 44Z" stroke="#f5ad1c" strokeWidth="6" /></Ico>
            <IconBox $w={1} $l={8}><Ico b={[77, 8, 3, 52]}><path d="M78.500 8V60" stroke="#8ba5bd" strokeWidth="3" /></Ico></IconBox>
            <IconBox $w={15} $l={8}><Ico b={[104, 14, 46, 40]}><path d="M106 50V18H119L123 23H142V31" fill="#d98f2c" /><path d="M106 51L114 30H149L142 51Z" fill="#fac170" stroke="#e5a047" strokeWidth="2" /></Ico></IconBox>
            <IconBox $w={16} $l={9.5}><Ico b={[179, 10, 46, 46]}><path d="M190 24Q204 14 214 20Q224 32 215 42Q211 48 203 51" stroke="#68b5ff" strokeWidth="7.500" /><path d="M180 14L184 34H204Z" fill="#68b5ff" /></Ico></IconBox>
            <IconBox $w={5} $l={7}><Caret color="#e5edf5" /></IconBox>
            <IconBox $w={16} $l={8.5}><Ico b={[287, 10, 46, 46]}><path d="M321 24Q308 14 297 20Q287 32 296 42Q300 48 308 51" stroke="#e6e6e6" strokeWidth="7.500" /><path d="M331 14L328 34H308Z" fill="#e6e6e6" /></Ico></IconBox>
            <IconBox $w={5} $l={7}><Caret color="#a9bccd" /></IconBox>
            <IconBox $w={6} $l={18.5}><Ico b={[428, 25, 18, 16]}><path d="M429 27H445" stroke="#c9d6e2" strokeWidth="2.500" /><path d="M430 32H444L437 40Z" fill="#c9d6e2" /></Ico></IconBox>
          </QuickAccess>
          <WindowTitle>A:Static Structural - Design1 - SpaceClaim</WindowTitle>
          <WindowButtons>
            <Ico b={[254, 20, 32, 30]}><path d="M255 34.500H285" stroke="#fff" strokeWidth="4" /></Ico>
            <Ico b={[335, 18, 38, 32]}><path d="M346 28V21H370V39H362" stroke="#fff" strokeWidth="3" /><path d="M346 22H370" stroke="#fff" strokeWidth="6" /><path d="M338 31H359V47H338Z" stroke="#fff" strokeWidth="3" /><path d="M337 32H360" stroke="#fff" strokeWidth="6" /></Ico>
            <Ico b={[420, 20, 28, 28]}><path d="M423 23L445 45M445 23L423 45" stroke="#fff" strokeWidth="4.500" /></Ico>
          </WindowButtons>
        </TitleBar>
        <TabBar>
          <Tab $w={62.5}>File</Tab>
          {TABS.map((t) => <Tab key={t} $active={t === "Design"}>{t}</Tab>)}
          <TabBarEnd>
            <Ico b={[349, 132, 26, 16]}><path d="M350 147L361 134L374 147Z" fill="#fff" stroke="#36485a" strokeWidth="2" /><path d="M357 147L361 142L367 147Z" fill="#36485a" /></Ico>
            <svg width="15" height="15" viewBox="0 0 15 15">
              <circle cx="7.5" cy="7.5" r="6.700" fill="#2c4fc0" stroke="#a9b8d8" strokeWidth="1.300" />
              <text x="7.500" y="11.300" textAnchor="middle" fontSize="10.500" fontWeight="700" fill="#fff">?</text>
            </svg>
          </TabBarEnd>
        </TabBar>
      </Header>
      <Ribbons />
      <Main>
        <SidePanel />
        <Work>
          <Viewport>
            <Canvas3D />
            <Guides />
          </Viewport>
          <DocBar>
            <DocTab>
              <Ico b={[748, 298, 44, 46]}><rect x="749" y="299" width="42" height="43" rx="4" fill="#fdc52a" /><path d="M751 342L763 299H774L787 342H777L768 311L760 342Z" fill="#221f18" /></Ico>
              <span>Design1*</span>
              <Ico b={[955, 310, 22, 22]}><path d="M957 312L974 329M974 312L957 329" stroke="#555" strokeWidth="4.500" /></Ico>
            </DocTab>
            <DocNav>
              <Ico b={[292, 98, 18, 28]}><path d="M307 102V122L295 112Z" stroke="#666" strokeWidth="2.500" /></Ico>
              <Ico b={[335, 98, 18, 28]}><path d="M338 102V122L350 112Z" stroke="#666" strokeWidth="2.500" /></Ico>
              <Ico b={[376, 98, 28, 28]}><path d="M379 103L400 122M400 103L379 122" stroke="#555" strokeWidth="4.500" /></Ico>
            </DocNav>
          </DocBar>
        </Work>
      </Main>
      <StatusEdge />
    </Shell>
  );
}
